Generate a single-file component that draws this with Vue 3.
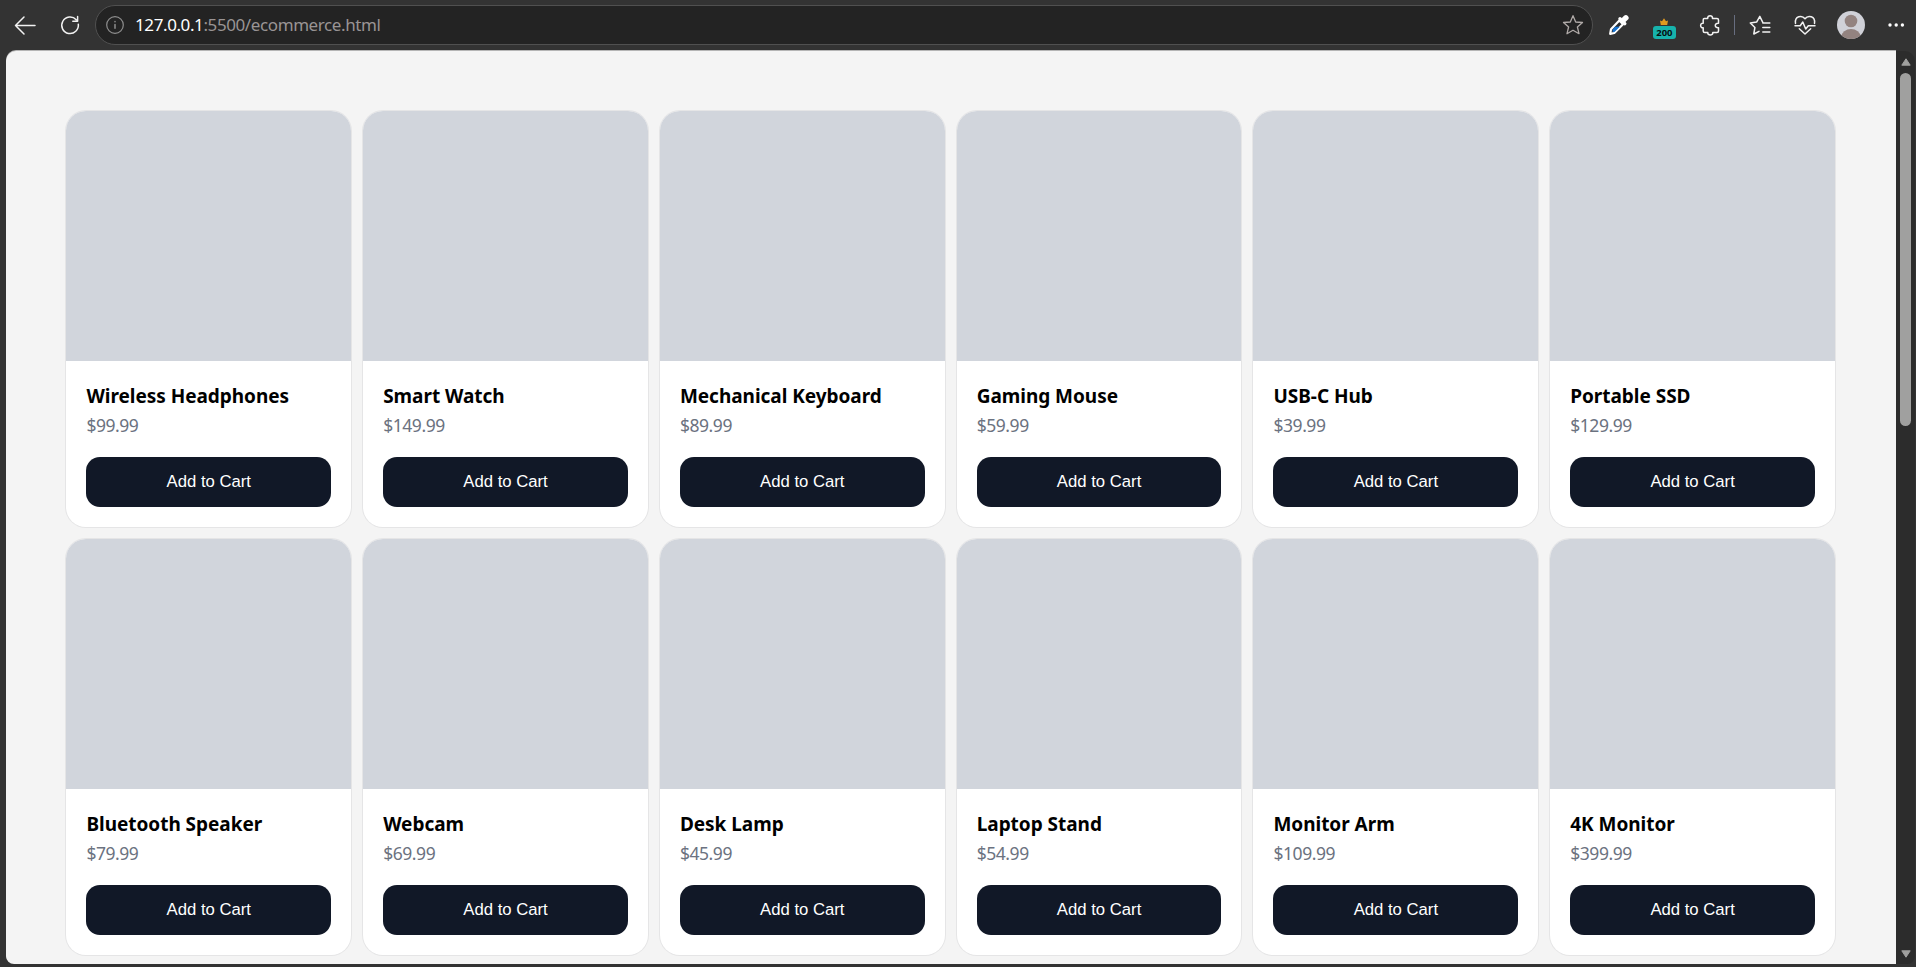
<template>
  <div class="browser">
    <header class="toolbar">
      <div class="nav-buttons">
        <button class="icon-btn" aria-label="Back">
          <svg width="24" height="24" viewBox="0 0 24 24">
            <path d="M22 12.5H2.5M11 4L2.5 12.5L11 21" stroke-width="1.5" />
          </svg>
        </button>
        <button class="icon-btn reload" aria-label="Reload">
          <svg width="24" height="24" viewBox="0 0 24 24">
            <path d="M20.3 11.2A8.3 8.3 0 1 1 18.2 6.7M19.6 3.6V8.3H14.8" stroke-width="1.5" />
          </svg>
        </button>
      </div>

      <div class="address-bar">
        <svg class="info" width="20" height="20" viewBox="0 0 20 20">
          <circle cx="10" cy="10" r="8.3" stroke-width="1.2" />
          <path d="M10 9.5V13.3M10 6.4V6.8" stroke-width="1.5" />
        </svg>
        <span class="url"><span class="host">127.0.0.1</span>:5500/ecommerce.html</span>
        <svg class="star" width="24" height="24" viewBox="0 0 24 24">
          <path d="M12 2.7L14.7 9L21.5 9.5L16.4 14L18 20.7L12 17.2L6 20.7L7.6 14L2.5 9.5L9.3 9Z" stroke-width="1.3" />
        </svg>
      </div>

      <div class="actions">
        <button class="action" aria-label="Color picker">
          <svg width="24" height="24" viewBox="0 0 24 24">
            <path d="M12.3 7.5L16 11.2L7.3 20L3.2 20.8L4 16.3Z" fill="#2a2d31" stroke="#fff" stroke-width="2.2" />
            <path d="M8 13.8H12.8L7.4 19H5.6V16.4Z" fill="#1673d1" stroke="none" />
            <path d="M13 5.8L17.8 10.6" stroke="#fff" stroke-width="3.4" />
            <path d="M16 7.6L18.9 4.8" stroke="#fff" stroke-width="5.4" />
          </svg>
        </button>
        <button class="action" aria-label="Status">
          <span class="status">
            <svg width="10" height="8" viewBox="0 0 10 8">
              <path d="M1 2.5L3 3.3L5 0.3L7 3.3L9 2.5L8.2 7H1.8Z" fill="#e09a20" stroke="none" />
            </svg>
            <span class="badge">200</span>
          </span>
        </button>
        <button class="action" aria-label="Extensions">
          <svg width="24" height="24" viewBox="0 0 24 24">
            <path d="M6.3 5.5H9.7C9.2 1.7 15 1.7 14.5 5.5H19Q20.5 5.5 20.5 7V10.3C16.2 9.7 16.2 15.3 20.5 14.7V18Q20.5 19.5 19 19.5H14.8C15.3 22.8 9.3 22.8 9.8 19.5H6.8Q5.2 19.5 5.2 18V14.8C1.8 15.3 1.8 9.7 5.2 10.2V7Q5.2 5.5 6.3 5.5Z" stroke-width="1.5" />
          </svg>
        </button>
        <span class="divider"></span>
        <button class="action" aria-label="Favorites">
          <svg width="24" height="24" viewBox="0 0 24 24">
            <path d="M14.9 9.6L11.8 3.3L8.6 9.1L2.3 10L6.9 14.5L5.8 21L11 18.3M14.8 10.1H21.8M14.8 14.5H21.8M14.8 18.9H21.8" stroke-width="1.5" />
          </svg>
        </button>
        <button class="action" aria-label="Essentials">
          <svg width="24" height="24" viewBox="0 0 24 24">
            <path d="M2.5 10.4C1.4 3 9 1.8 12 5.8C15 1.8 22.6 3 21.5 10.4M6.3 15.7L12 21L17.7 15.7" stroke-width="1.5" />
            <path d="M2 12.7H7.2L9.8 9L12.7 16L15.3 12.7H22" stroke-width="1.5" />
          </svg>
        </button>
        <button class="action" aria-label="Profile">
          <svg width="28" height="28" viewBox="0 0 28 28">
            <defs>
              <clipPath id="avatar"><circle cx="14" cy="14" r="14" /></clipPath>
            </defs>
            <g clip-path="url(#avatar)" stroke="none">
              <rect width="28" height="28" fill="#d0d1d8" />
              <circle cx="14" cy="10" r="6.3" fill="#938380" />
              <ellipse cx="14" cy="25.5" rx="9.5" ry="7.5" fill="#938380" />
            </g>
          </svg>
        </button>
        <button class="action" aria-label="More">
          <svg width="18" height="6" viewBox="0 0 18 6">
            <g fill="#fff" stroke="none">
              <circle cx="3" cy="3" r="1.7" />
              <circle cx="9.2" cy="3" r="1.7" />
              <circle cx="15.4" cy="3" r="1.7" />
            </g>
          </svg>
        </button>
      </div>
    </header>

    <div class="viewport">
      <main class="page">
        <div class="products">
          <article v-for="product in products" :key="product.name" class="card">
            <div class="card-image"></div>
            <div class="card-body">
              <h3>{{ product.name }}</h3>
              <p class="price">${{ product.price }}</p>
              <button class="cart-btn">Add to Cart</button>
            </div>
          </article>
        </div>
      </main>

      <div class="scrollbar">
        <svg width="10" height="8" viewBox="0 0 10 8">
          <path d="M5 0.8L9.2 7.2H0.8Z" />
        </svg>
        <div class="thumb"></div>
        <svg width="10" height="8" viewBox="0 0 10 8">
          <path d="M5 7.2L9.2 0.8H0.8Z" />
        </svg>
      </div>
    </div>
  </div>
</template>

<script setup>
import { ref } from 'vue';

const products = ref([
  { name: 'Wireless Headphones', price: '99.99' },
  { name: 'Smart Watch', price: '149.99' },
  { name: 'Mechanical Keyboard', price: '89.99' },
  { name: 'Gaming Mouse', price: '59.99' },
  { name: 'USB-C Hub', price: '39.99' },
  { name: 'Portable SSD', price: '129.99' },
  { name: 'Bluetooth Speaker', price: '79.99' },
  { name: 'Webcam', price: '69.99' },
  { name: 'Desk Lamp', price: '45.99' },
  { name: 'Laptop Stand', price: '54.99' },
  { name: 'Monitor Arm', price: '109.99' },
  { name: '4K Monitor', price: '399.99' }
]);
</script>

<style>
body {
  background-color: #333333;
  overflow: hidden;
}
</style>

<style scoped>
* {
  box-sizing: border-box;
}

.browser {
  width: 100%;
  height: 100vh;
  display: flex;
  flex-direction: column;
  background-color: #333333;
  font-family: "Noto Sans", sans-serif;
}

button {
  border: none;
  background: none;
  padding: 0;
  cursor: pointer;
}

.toolbar {
  height: 51px;
  flex-shrink: 0;
  padding-bottom: 1px;
  display: flex;
  align-items: center;
}

.toolbar svg {
  display: block;
  fill: none;
  stroke: #f2f2f2;
  stroke-linecap: round;
  stroke-linejoin: round;
}

.nav-buttons {
  width: 95px;
  flex-shrink: 0;
  padding-left: 13px;
  display: flex;
  gap: 21px;
}

.address-bar {
  width: 1498px;
  flex-shrink: 0;
  height: 40px;
  padding: 0 7px 0 9px;
  display: flex;
  align-items: center;
  border: 1px solid #505050;
  border-radius: 20px;
  background-color: #232323;
}

.address-bar .info {
  stroke: #8e8e8e;
}

.address-bar .star {
  margin-left: auto;
  stroke: #b0aaa8;
}

.url {
  margin-left: 10px;
  padding-bottom: 1px;
  font-size: 17px;
  line-height: 24px;
  color: #999494;
  letter-spacing: -0.4px;
}

.host {
  color: #ffffff;
}

.actions {
  flex: 1;
  min-width: 0;
  display: flex;
  align-items: center;
  padding-left: 3px;
}

.action {
  width: 45.6px;
  flex-shrink: 0;
  display: flex;
  justify-content: center;
}

.divider {
  width: 1px;
  height: 20px;
  flex-shrink: 0;
  margin: 0 2px 0 1px;
  background-color: #686e80;
}

.status {
  display: flex;
  flex-direction: column;
  align-items: center;
  padding-top: 6px;
}

.badge {
  width: 23px;
  height: 13px;
  border-radius: 3px;
  background-color: #17b3ac;
  color: #061010;
  font-family: "Open Sans", sans-serif;
  font-size: 9.5px;
  font-weight: 700;
  line-height: 13px;
}

.viewport {
  height: 913px;
  margin-left: 6px;
  display: flex;
}

.page {
  width: 1890px;
  padding: 60px 61px 60px 60.4px;
  overflow: hidden;
  background-color: #f4f4f4;
  border-radius: 10px 0 0 8px;
  box-shadow: 0 -1px 0 #b5b5b5;
}

.products {
  display: grid;
  grid-template-columns: repeat(6, 1fr);
  gap: 12px;
}

.card {
  height: 416px;
  overflow: hidden;
  background-color: #ffffff;
  border-radius: 20px;
  box-shadow: 0 0 0 1px #e5e5e6;
}

.card-image {
  height: 250px;
  background-color: #d1d5dc;
}

.card-body {
  padding: 20px;
}

.card-body h3 {
  margin: 0;
  font-size: 19px;
  line-height: 30px;
  font-weight: bold;
  letter-spacing: -0.03px;
  color: #000000;
}

.price {
  margin: 0 0 18px;
  font-size: 17.5px;
  line-height: 28px;
  letter-spacing: -0.45px;
  color: #6b7280;
}

.cart-btn {
  width: 100%;
  height: 50px;
  padding-bottom: 1px;
  border-radius: 14px;
  background-color: #111827;
  color: #ffffff;
  font-family: "Liberation Sans", Arial, sans-serif;
  font-size: 16.7px;
}

.scrollbar {
  width: 19px;
  padding: 7px 4px 6px;
  display: flex;
  flex-direction: column;
  align-items: center;
  background-color: #2c2c2c;
  border-radius: 0 10px 8px 0;
}

.scrollbar svg {
  fill: #a0a09f;
  stroke: #a0a09f;
  stroke-linejoin: round;
}

.thumb {
  width: 11px;
  height: 353px;
  margin: 7px 0 auto;
  border-radius: 6px;
  background-color: #a0a09f;
}
</style>
